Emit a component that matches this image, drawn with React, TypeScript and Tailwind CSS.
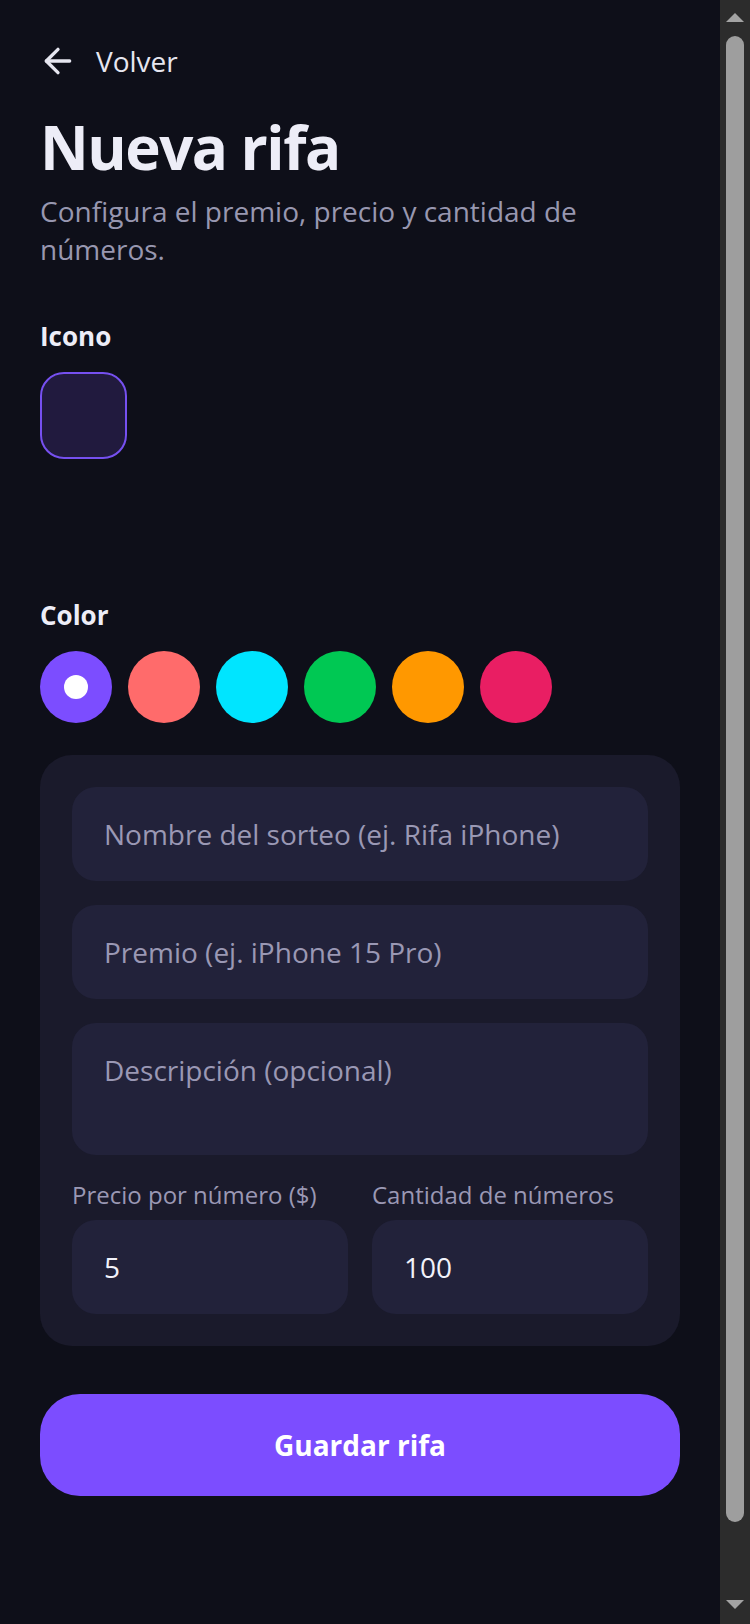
import { ArrowLeft } from "lucide-react"

const colors = ["#7c4dff", "#ff6b6b", "#00e5ff", "#00c853", "#ff9800", "#e91e63"]

function Scrollbar() {
  return (
    <div className="flex w-[30px] shrink-0 flex-col items-center bg-[#2c2c2c]">
      <div className="flex h-[30px] w-full items-start justify-center pt-[13px]">
        <svg width="18" height="9" viewBox="0 0 18 9">
          <polygon points="9,0 18,9 0,9" fill="#a3a3a3" />
        </svg>
      </div>
      <div className="mt-[6px] w-[18px] flex-1 rounded-full bg-[#9e9e9e]"></div>
      <div className="mt-[72px] flex h-[30px] w-full items-start justify-center pt-[6px]">
        <svg width="18" height="9" viewBox="0 0 18 9">
          <polygon points="0,0 18,0 9,9" fill="#a3a3a3" />
        </svg>
      </div>
    </div>
  )
}

export default function App() {
  return (
    <div className="flex h-[1624px] overflow-hidden bg-[#0e0f19] [font-family:'Open_Sans',sans-serif]">
      <div className="min-w-0 flex-1 px-10 pt-[41px]">
        {/* Back */}
        <button className="flex h-10 items-center gap-[18px] text-[#e6e6f0]">
          <ArrowLeft size={40} strokeWidth={2} className="-ml-[2px]" />
          <span className="text-[28px] leading-10">Volver</span>
        </button>

        {/* Header */}
        <h1 className="mt-[30px] text-[60px] leading-[72px] font-bold tracking-[-1.5px] text-[#ededf7]">Nueva rifa</h1>
        <p className="mt-[9px] text-[28px] leading-[38px] text-[#9897b0]">
          Configura el premio, precio y cantidad de números.
        </p>

        {/* Icon */}
        <h2 className="mt-[50px] text-[26px] leading-9 font-bold text-[#ededf7]">Icono</h2>
        <div className="mt-[18px] h-[87px] w-[87px] rounded-[24px] border-2 border-[#7650f0] bg-[#211a3e]"></div>

        {/* Color */}
        <h2 className="mt-[138px] text-[26px] leading-9 font-bold text-[#ededf7]">Color</h2>
        <div className="mt-[18px] flex gap-4">
          {colors.map((c, i) => (
            <button
              key={c}
              className="flex h-[72px] w-[72px] items-center justify-center rounded-full"
              style={{ backgroundColor: c }}
            >
              {i === 0 && <span className="h-6 w-6 rounded-full bg-white"></span>}
            </button>
          ))}
        </div>

        {/* Form card */}
        <div className="mt-8 flex flex-col gap-6 rounded-[32px] bg-[#1a1a2b] p-8">
          <input
            placeholder="Nombre del sorteo (ej. Rifa iPhone)"
            className="h-[94px] rounded-3xl bg-[#22223a] px-8 text-[28px] text-white outline-none placeholder:text-[#9a98b4]"
          />
          <input
            placeholder="Premio (ej. iPhone 15 Pro)"
            className="h-[94px] rounded-3xl bg-[#22223a] px-8 text-[28px] text-white outline-none placeholder:text-[#9a98b4]"
          />
          <textarea
            placeholder="Descripción (opcional)"
            className="h-[132px] resize-none rounded-3xl bg-[#22223a] px-8 py-7 text-[28px] leading-[38px] text-white outline-none placeholder:text-[#9a98b4]"
          />
          <div className="grid grid-cols-2 gap-6">
            <label className="flex min-w-0 flex-col">
              <span className="mb-[9px] text-[24px] leading-8 text-[#9a98b4]">Precio por número ($)</span>
              <input
                defaultValue="5"
                className="h-[94px] min-w-0 rounded-3xl bg-[#22223a] px-8 text-[28px] text-[#f2f2fa] outline-none"
              />
            </label>
            <label className="flex min-w-0 flex-col">
              <span className="mb-[9px] text-[24px] leading-8 text-[#9a98b4]">Cantidad de números</span>
              <input
                defaultValue="100"
                className="h-[94px] min-w-0 rounded-3xl bg-[#22223a] px-8 text-[28px] text-[#f2f2fa] outline-none"
              />
            </label>
          </div>
        </div>

        <button className="mt-12 h-[102px] w-full rounded-[40px] bg-[#7c4dff] text-[28px] font-bold text-white">
          Guardar rifa
        </button>
      </div>
      <Scrollbar />
    </div>
  )
}
